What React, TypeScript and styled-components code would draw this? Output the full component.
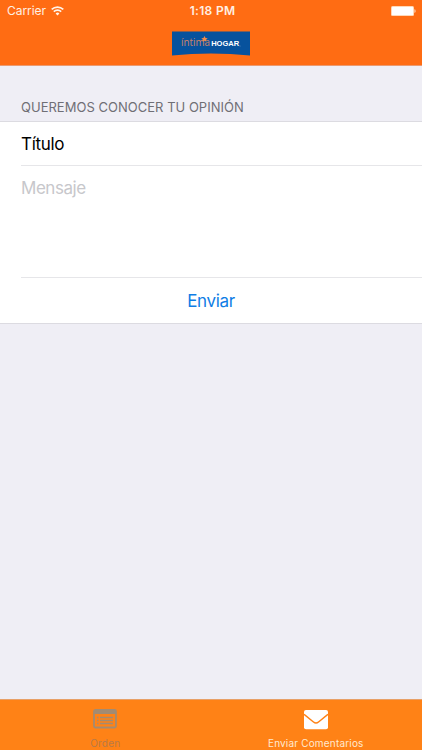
import React from "react";
import styled, { createGlobalStyle } from "styled-components";

const GlobalStyle = createGlobalStyle`
  *, *::before, *::after { box-sizing: border-box; }
  body { margin: 0; font-family: Inter, Roboto, sans-serif; }
`;

const Screen = styled.main`
  display: flex;
  flex-direction: column;
  width: 100%;
  height: 750px;
  overflow: hidden;
  background: #efeef5;
`;

const Header = styled.header`
  height: 66px;
  background: #ff6c13;
  border-bottom: 1px solid #eb9a70;
`;

const StatusBar = styled.div`
  display: grid;
  grid-template-columns: 1fr auto 1fr;
  align-items: center;
  height: 22px;
  padding: 0 6px 0 7px;
  color: #fff0e4;
  font-size: 12px;
  line-height: 22px;
`;

const Carrier = styled.div`
  display: flex;
  align-items: center;
  gap: 5px;
  letter-spacing: -0.05px;
`;

const Clock = styled.time`
  font-weight: 600;
  font-size: 12px;
  letter-spacing: 0.3px;
  padding-left: 2px;
`;

const BatterySlot = styled.div`
  display: flex;
  justify-content: flex-end;
`;

const Brand = styled.div`
  display: flex;
  justify-content: center;
  padding-top: 9px;
`;

const SectionTitle = styled.h1`
  height: 56px;
  margin: 0;
  padding: 32px 21px 0;
  border-bottom: 1px solid #dcdbe1;
  color: #6f6f75;
  font-size: 13px;
  font-weight: 400;
  line-height: 19px;
  letter-spacing: 0.02px;
`;

const Form = styled.section`
  background: #fff;
  border-bottom: 1px solid #dcdbe1;
`;

const Field = styled.div<{ $height: number; $placeholder?: boolean }>`
  height: ${(p) => p.$height}px;
  margin-left: 21px;
  border-bottom: 1px solid #e6e6e9;
  color: ${(p) => (p.$placeholder ? "#c7c7cb" : "#000")};
  font-size: 17px;
  line-height: 44px;
  letter-spacing: ${(p) => (p.$placeholder ? "-0.45px" : "-0.3px")};
`;

const SubmitButton = styled.button`
  display: block;
  width: 100%;
  height: 45px;
  padding: 1px 0 0;
  border: 0;
  background: transparent;
  color: #0f7de5;
  font: 400 17px/44px Inter, sans-serif;
  letter-spacing: -0.35px;
`;

const TabBar = styled.nav`
  display: grid;
  grid-template-columns: 1fr 1fr;
  height: 51px;
  margin-top: auto;
  padding-right: 1px;
  background: #ff8216;
  border-top: 1px solid #e8a067;
`;

const Tab = styled.div<{ $active?: boolean }>`
  display: flex;
  flex-direction: column;
  align-items: center;
  color: ${(p) => (p.$active ? "#fff" : "#a38b72")};
`;

const TabIcon = styled.div<{ $top: number }>`
  height: 36px;
  padding-top: ${(p) => p.$top}px;
`;

const TabLabel = styled.span<{ $active?: boolean }>`
  color: ${(p) => (p.$active ? "#ffe9d0" : "#b87a46")};
  font-size: 10px;
  line-height: 14px;
  letter-spacing: 0.18px;
`;

const WifiIcon = () => (
  <svg width="13" height="10" viewBox="0 0 13 10" fill="none" stroke="#fff4ea" strokeWidth="1.6">
    <path d="M.7 3.4a8.4 8.4 0 0 1 11.6 0M2.8 5.6a5.3 5.3 0 0 1 7.4 0" />
    <path d="M4.6 7.5a2.8 2.8 0 0 1 3.8 0L6.5 9.5z" fill="#fff4ea" stroke="none" />
  </svg>
);

const BatteryIcon = () => (
  <svg width="25" height="10" viewBox="0 0 25 10">
    <rect width="23" height="10" rx="1.5" fill="#ffd8b8" />
    <rect x="1" y="1" width="21" height="8" rx=".5" fill="#fff" />
    <path d="M23.5 3.2c1.3.2 1.3 3.4 0 3.6z" fill="#fff0e4" />
  </svg>
);

const BrandLogo = () => (
  <svg width="78" height="25" viewBox="0 0 78 25" role="img" aria-label="íntima HOGAR">
    <path d="M0 .5H78V24.5Q39 20.5 0 24.5Z" fill="#07529d" />
    <text x="9" y="15.3" fill="#d08468" fontFamily="Open Sans" fontSize="11" textLength="29" lengthAdjust="spacingAndGlyphs">
      íntima
    </text>
    <path d="m32.5 5 1 2 2.2.3-1.6 1.4.3 2.1-1.9-1-1.9 1 .3-2.1-1.6-1.4 2.2-.3z" fill="#f18b4b" />
    <text x="39.2" y="15.3" fill="#fff" fontFamily="Liberation Sans" fontSize="8" fontWeight="700" textLength="28" lengthAdjust="spacingAndGlyphs">
      HOGAR
    </text>
    <circle cx="68" cy="15" r=".4" fill="#b9cce2" />
  </svg>
);

const OrderIcon = () => (
  <svg width="24" height="20" viewBox="0 0 24 20" fill="none" stroke="currentColor">
    <rect x="1" y="1" width="22" height="17.5" rx="1.5" strokeWidth="1.8" />
    <path d="M1 1h22v4H1z" fill="currentColor" stroke="none" />
    <path d="M4 8.5h1.5M7 8.5h13M4 11.5h1.5M7 11.5h13M4 14.5h1.5M7 14.5h13" strokeWidth="1.4" />
  </svg>
);

const MailIcon = () => (
  <svg width="24" height="20" viewBox="0 0 24 20">
    <rect width="24" height="19.3" rx="2" fill="#fff" />
    <path d="M0 4.3C3.5 7 7 10 9.5 12Q12 14 14.5 12C17 10 20.5 7 24 4.3" fill="none" stroke="#ff8216" strokeWidth="1.5" />
  </svg>
);

export default function App() {
  return (
    <Screen>
      <GlobalStyle />
      <Header>
        <StatusBar>
          <Carrier>Carrier <WifiIcon /></Carrier>
          <Clock>1:18 PM</Clock>
          <BatterySlot><BatteryIcon /></BatterySlot>
        </StatusBar>
        <Brand><BrandLogo /></Brand>
      </Header>
      <SectionTitle>QUEREMOS CONOCER TU OPINIÓN</SectionTitle>
      <Form>
        <Field $height={44}>Título</Field>
        <Field $height={112} $placeholder>Mensaje</Field>
        <SubmitButton type="button">Enviar</SubmitButton>
      </Form>
      <TabBar>
        <Tab>
          <TabIcon $top={9}><OrderIcon /></TabIcon>
          <TabLabel>Orden</TabLabel>
        </Tab>
        <Tab $active>
          <TabIcon $top={10}><MailIcon /></TabIcon>
          <TabLabel $active>Enviar Comentarios</TabLabel>
        </Tab>
      </TabBar>
    </Screen>
  );
}
